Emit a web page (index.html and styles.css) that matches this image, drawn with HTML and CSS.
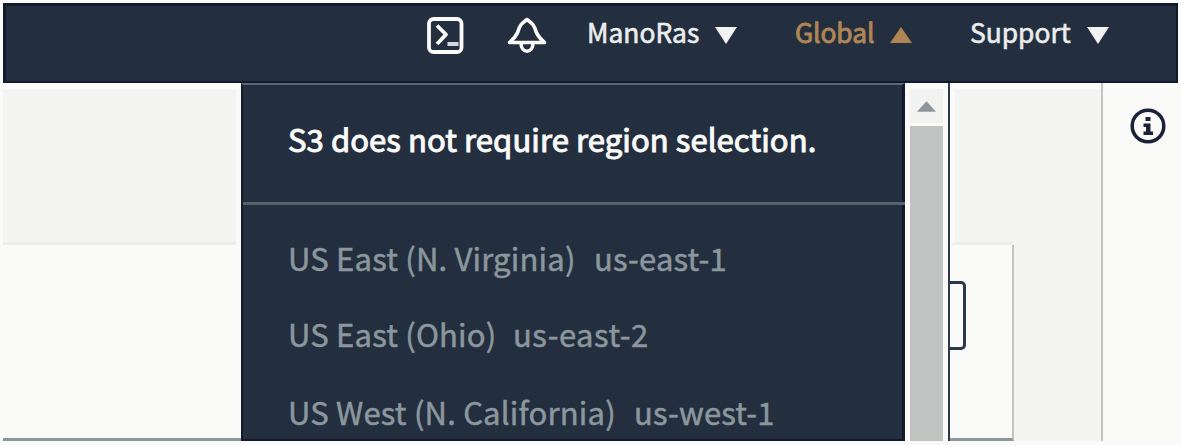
FILE: index.html
```
<!DOCTYPE html>
<html lang="en">
<head>
<meta charset="utf-8">
<title>S3 region menu</title>
<link rel="stylesheet" href="styles.css">
</head>
<body>
<header class="topbar">
  <svg class="icon shell" viewBox="0 0 38 38"><rect x="2" y="2" width="32.500" height="33" rx="4.500"/><path d="M10 8.500 19 17.500 10 27"/><path class="cursor" d="M20.500 27H31.500"/></svg>
  <svg class="icon bell" viewBox="0 0 40 38"><path d="M2.500 25.500C7 21.500 9.500 18.500 11 14.500C12.500 8.500 14.500 6.500 20 2.500C25.500 6.500 27.500 8.500 29 14.500C30.500 18.500 33 21.500 37.500 25.500Z"/><path d="M14 26c0 11 12 11 12 0"/></svg>
  <nav class="menus">
    <span class="menu user"><span class="label">ManoRas</span><svg class="caret" viewBox="0 0 22 18"><path d="M0 1h22L11 18z"/></svg></span>
    <span class="menu global"><span class="label">Global</span><svg class="caret" viewBox="0 0 22 18"><path d="M0 17h22L11 1z"/></svg></span>
    <span class="menu support"><span class="label">Support</span><svg class="caret" viewBox="0 0 22 18"><path d="M0 1h22L11 18z"/></svg></span>
  </nav>
</header>
<main class="workspace">
  <section class="left"><div class="shade"></div></section>
  <section class="dropdown">
    <h1 class="notice">S3 does not require region selection.</h1>
    <ul class="regions">
      <li class="r1"><span class="name">US East (N. Virginia)</span><span class="code">us-east-1</span></li>
      <li class="r2"><span class="name">US East (Ohio)</span><span class="code">us-east-2</span></li>
      <li class="r3"><span class="name">US West (N. California)</span><span class="code">us-west-1</span></li>
    </ul>
  </section>
  <div class="scrollbar">
    <div class="up"><svg viewBox="0 0 20 11"><path d="M0 11h20L10 0z"/></svg></div>
    <div class="thumb"></div>
  </div>
  <section class="content"><div class="band"></div><div class="card"><div class="button"></div></div></section>
  <aside class="info"><svg viewBox="0 0 36 36"><circle cx="18" cy="18" r="15.800"/><path class="glyph" d="M15.500 9h5v4h-5zM13.500 15.500h7v8h2.500v3.500h-9.500v-3.500h2.500v-4.500h-2.500z"/></svg></aside>
</main>
</body>
</html>
```
FILE: styles.css
```
* { box-sizing: border-box; }
body {
  margin: 0;
  padding: 3px 0 4px 3px;
  height: 445px;
  overflow: hidden;
  background: #fafaf8;
  font-family: "Noto Sans CJK SC", "Noto Sans", sans-serif;
}
svg { display: block; flex: none; }
.topbar {
  display: flex;
  align-items: flex-start;
  width: 1175px;
  height: 80px;
  padding: 11px 0 0 421px;
  background: #232f3f;
  border: 2px solid #121b2c;
  border-top-width: 3px;
  border-left-width: 3px;
}
.icon { fill: none; stroke: #fafaf8; stroke-width: 3.8; stroke-linejoin: round; }
.shell { width: 38px; height: 38px; }
.shell .cursor { stroke-width: 4; stroke: #d5d9dc; }
.bell { width: 40px; height: 38px; margin-left: 42px; stroke-width: 3.6; }
.menus { display: flex; margin-left: 40px; }
.menu { display: flex; align-items: flex-start; color: #eceded; font-size: 26.4px; line-height: 30px; white-space: nowrap; -webkit-text-stroke: .6px currentColor; }
.caret { width: 22px; height: 18px; margin-top: 9px; fill: #f2f2f0; }
.label { flex: none; }
.user .label { width: 128px; }
.global { margin-left: 58px; color: #b08555; letter-spacing: -.1px; -webkit-text-stroke-width: .9px; }
.global .label { width: 95px; }
.global .caret { fill: #b08555; }
.support { margin-left: 58px; }
.support .label { width: 117px; }

.workspace { display: flex; height: 358px; }
.left { width: 238px; padding-top: 6px; border-bottom: 3px solid #8c979d; }
.shade { width: 233px; height: 156px; background: #f4f4f2; border-bottom: 3px solid #ededec; }
.dropdown {
  width: 664px;
  background: #232f3f;
  border: solid #121b2c;
  border-width: 0 3px 2px 2px;
  border-top: 2px solid #5b6770;
}
.notice { margin: 0 -3px 0 0; height: 120px; padding: 36px 0 0 45px; border-bottom: 3px solid #56616c; color: #fafaf8; font-size: 31px; line-height: 36px; font-weight: 400; letter-spacing: .09px; white-space: nowrap; -webkit-text-stroke: 1px currentColor; }
.regions { list-style: none; margin: 0; height: 234px; overflow: hidden; padding: 35px 0 0 45px; color: #8c979d; font-size: 31px; line-height: 36px; letter-spacing: .2px; }
.regions li { display: flex; height: 77px; white-space: nowrap; -webkit-text-stroke: .5px currentColor; }
.regions .r1 { height: 76px; }
.regions .r2 { height: 78px; }
.r2 .code { letter-spacing: .5px; }
.name { flex: none; }
.r1 .name { width: 306px; }
.r2 .name { width: 225px; }
.r3 .name { width: 346px; }
.scrollbar { width: 45px; padding: 6px 5px 0; background: #fafaf8; border-right: 2px solid #2b394a; }
.up { width: 33px; height: 37px; padding: 12px 7px; background: #f2f2f0; border-bottom: 3px solid #fafaf8; }
.up svg { width: 19px; height: 11px; fill: #8c979d; }
.thumb { width: 33px; height: 315px; background: #c1c3c2; }
.content { width: 153px; padding-top: 6px; background: linear-gradient(#fafaf8 6px, #f4f4f2 6px); border-right: 2px solid #c1c3c2; }
.band { width: 63px; height: 156px; border-bottom: 3px solid #ededec; border-left: 5px solid #fafaf8; }
.card { width: 64px; height: 196px; padding-top: 36px; background: #fafaf8; border-right: 2px solid #c1c3c2; border-bottom: 3px solid #8c979d; }
.button { width: 16px; height: 69px; border: 3px solid #2b394a; border-left: 0; border-radius: 0 5px 5px 0; }
.info { width: 78px; padding: 25px 0 0 27px; }
.info svg { width: 36px; height: 36px; fill: none; stroke: #18233a; stroke-width: 3.5; }
.info .glyph { fill: #18233a; stroke: none; }
```
